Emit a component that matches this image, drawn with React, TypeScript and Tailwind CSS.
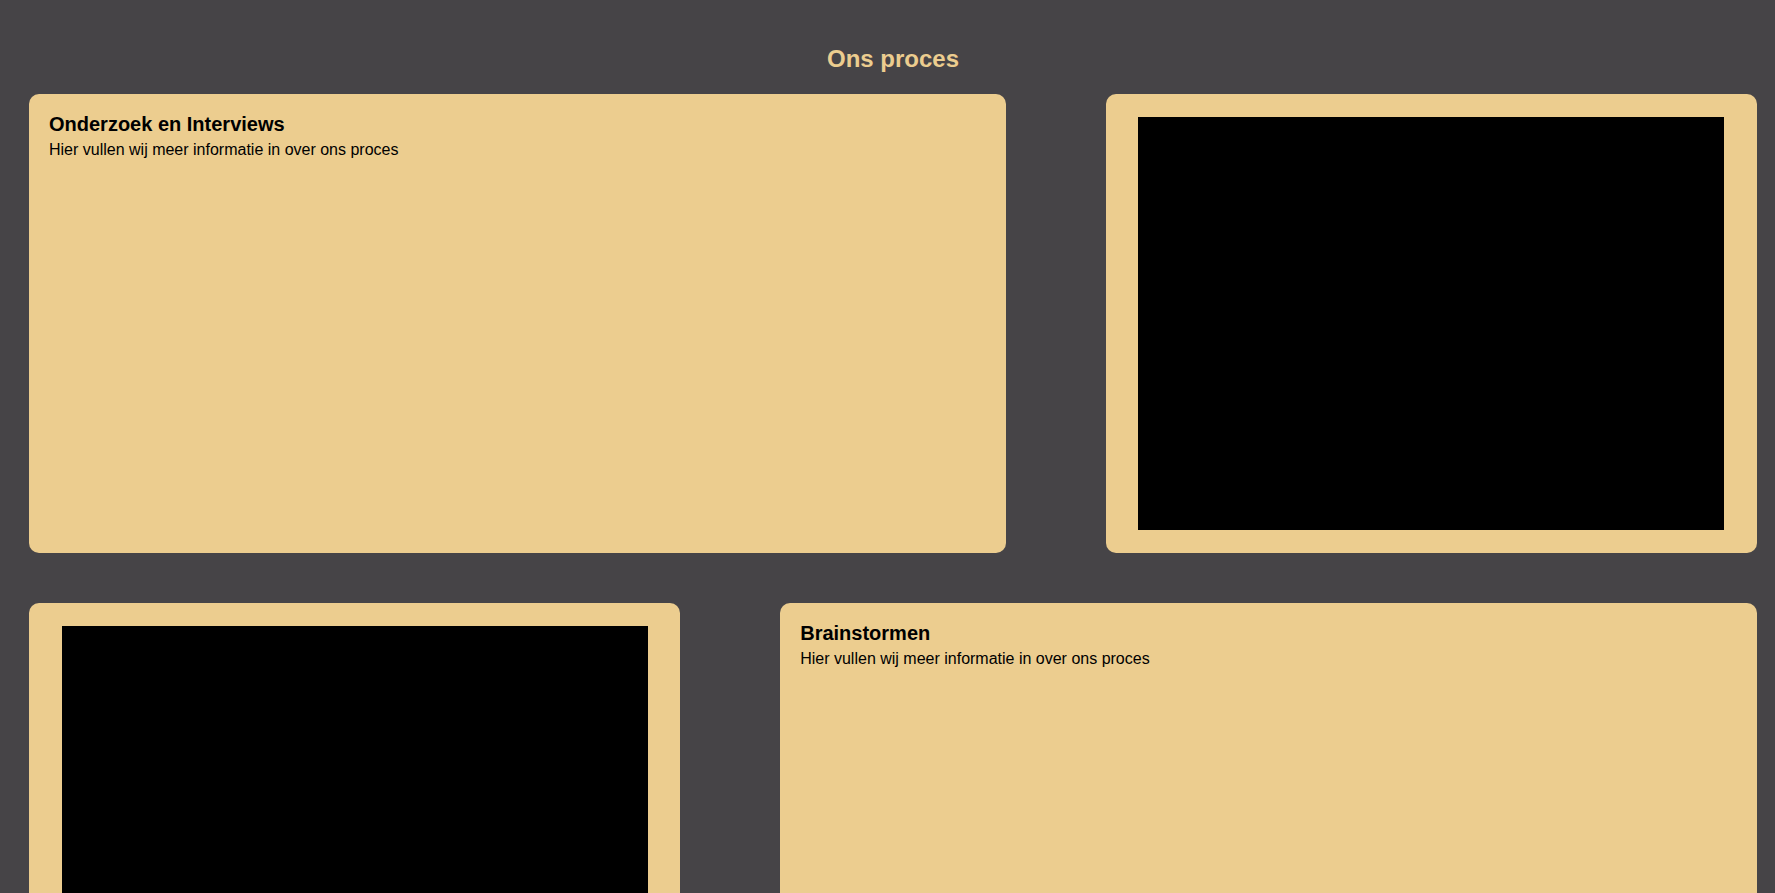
const font = { fontFamily: '"Liberation Sans", Arial, sans-serif' };

function TextCard({ title }: { title: string }) {
  return (
    <div className="h-[459px] rounded-[10px] bg-[#eccd8f] px-5 pt-[19px]">
      <h3 className="text-[20px] leading-[23px] font-bold text-black">{title}</h3>
      <p className="mt-[5px] text-[16px] leading-[18px] text-black">
        Hier vullen wij meer informatie in over ons proces
      </p>
    </div>
  );
}

function ImageCard() {
  return (
    <div className="h-[459px] rounded-[10px] bg-[#eccd8f] flex items-center justify-center">
      <div className="w-[90%] h-[90%] bg-black" />
    </div>
  );
}

export default function App() {
  return (
    <div className="min-h-screen bg-[#464447] pl-[29px] pr-[18px] pt-[45px]" style={font}>
      <h2 className="text-center text-[24px] leading-[28px] font-bold text-[#eccd8f]">Ons proces</h2>

      <div className="mt-[21px] flex flex-col gap-[50px] pb-10">
        <div className="grid grid-cols-[3fr_2fr] gap-x-[100px]">
          <TextCard title="Onderzoek en Interviews" />
          <ImageCard />
        </div>
        <div className="grid grid-cols-[2fr_3fr] gap-x-[100px]">
          <ImageCard />
          <TextCard title="Brainstormen" />
        </div>
      </div>
    </div>
  );
}
